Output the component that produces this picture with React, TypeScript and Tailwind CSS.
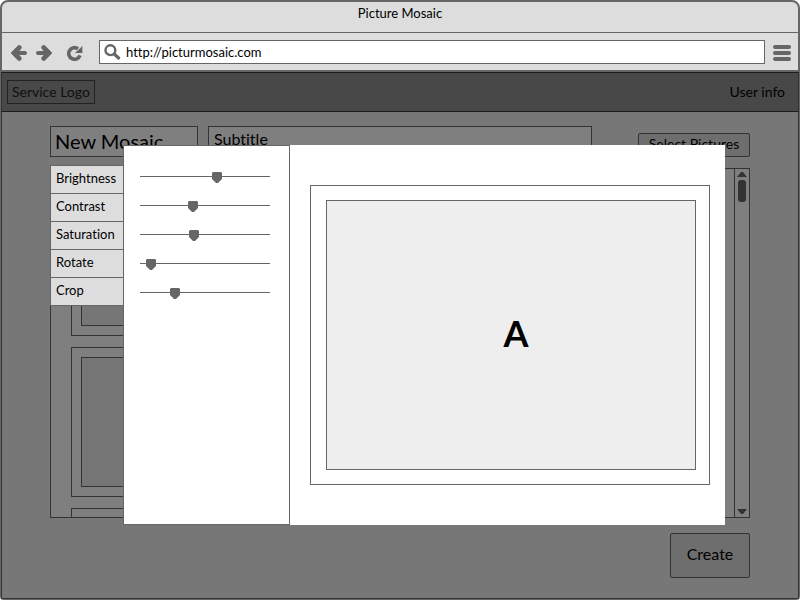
import React from "react";

const sliders = [
  { name: "Brightness", value: 72 },
  { name: "Contrast", value: 48 },
  { name: "Saturation", value: 49 },
  { name: "Rotate", value: 6 },
  { name: "Crop", value: 30 },
];

const thumbnails = Array.from({ length: 9 }, (_, i) => i);

function Arrow({ className = "" }: { className?: string }) {
  return (
    <svg width="16" height="16" viewBox="0 0 16 16" fill="none" stroke="#666" className={className} aria-hidden="true">
      <path d="M4 8H14" strokeWidth="4" strokeLinecap="round" />
      <path d="M8.2 2.6L3 8L8.2 13.4" strokeWidth="4.8" strokeLinecap="round" />
      <path d="M0 8L5 3V13Z" fill="#666" stroke="none" />
    </svg>
  );
}

function Toolbar() {
  return (
    <div className="flex h-[39px] items-center border-b-2 border-[#666] pr-[7px] pl-[9px]">
      <button aria-label="Back" className="mr-[9px] pt-[2px]">
        <Arrow />
      </button>
      <button aria-label="Forward" className="mr-[14px] pt-[2px]">
        <Arrow className="rotate-180" />
      </button>
      <button aria-label="Reload" className="mr-4 pt-[2px]">
        <svg width="17" height="16" viewBox="0 0 17 16" fill="none" aria-hidden="true">
          <path d="M12 3.8A5.8 5.8 0 1 0 14 10.4" stroke="#666" strokeWidth="3.6" />
          <path d="M16.4 1V8H9Z" fill="#666" />
        </svg>
      </button>
      <label className="flex h-6 min-w-0 flex-1 items-center border border-[#666] bg-white pl-1">
        <svg width="17" height="16" viewBox="0 0 17 16" fill="none" stroke="#666" aria-hidden="true">
          <circle cx="6.4" cy="6.2" r="4.9" strokeWidth="2.4" />
          <path d="M10.2 10L14.6 14" strokeWidth="3.2" strokeLinecap="round" />
        </svg>
        <input
          aria-label="Address"
          defaultValue="http://picturmosaic.com"
          className="ml-[5px] min-w-0 flex-1 bg-transparent pt-[2px] text-[13px] outline-none"
        />
      </label>
      <button aria-label="Menu" className="ml-2 flex w-[18px] flex-col gap-[2px] pt-[2px]">
        <span className="h-1 rounded-full bg-[#666]" />
        <span className="h-1 rounded-full bg-[#666]" />
        <span className="h-1 rounded-full bg-[#666]" />
      </button>
    </div>
  );
}

function Gallery() {
  return (
    <div className="mt-[11px] flex h-[350px] border border-[#666] bg-white">
      <div className="grid flex-1 auto-rows-[150px] grid-cols-3 gap-[11px] overflow-hidden px-5 pt-[17px]">
        {thumbnails.map((n) => (
          <div key={n} className="border border-[#666] p-[9px]">
            <div className="h-full border border-[#666] bg-[#ededed]" />
          </div>
        ))}
      </div>
      <div className="flex w-[15px] flex-col items-center border-l border-[#666] py-[3px]">
        <svg width="10" height="5" viewBox="0 0 10 5" aria-hidden="true">
          <path d="M0 5L4 0H6L10 5Z" fill="#666" />
        </svg>
        <div className="mt-[3px] h-[22px] w-2 rounded-[3px] bg-[#666]" />
        <svg width="10" height="5" viewBox="0 0 10 5" className="mt-auto" aria-hidden="true">
          <path d="M0 0L4 5H6L10 0Z" fill="#666" />
        </svg>
      </div>
    </div>
  );
}

function Editor() {
  return (
    <div className="absolute -inset-x-px top-0 -bottom-px flex items-start bg-black/50 pt-[73px] pr-[74px] pl-[49px]">
      <div className="mt-5 w-[73px] border-t border-l border-[#666] bg-[#ddd]">
        {sliders.map((s) => (
          <label
            key={s.name}
            htmlFor={s.name}
            className="block h-7 border-b border-[#666] pl-[5px] text-[13px] leading-6 whitespace-nowrap"
          >
            {s.name}
          </label>
        ))}
      </div>
      <div role="dialog" aria-label="Edit picture" className="flex min-w-0 flex-1 bg-white">
        <div className="flex w-[167px] flex-col gap-[18px] border border-[#666] px-4 pt-[26px]">
          {sliders.map((s) => (
            <input
              key={s.name}
              id={s.name}
              type="range"
              min={0}
              max={120}
              defaultValue={s.value}
              className="h-[11px] w-[130px] appearance-none bg-transparent bg-[linear-gradient(#666,#666)] bg-[length:100%_1px] bg-[position:0_4px] bg-no-repeat [&::-webkit-slider-thumb]:h-[11px] [&::-webkit-slider-thumb]:w-[10px] [&::-webkit-slider-thumb]:appearance-none [&::-webkit-slider-thumb]:bg-[#666] [&::-webkit-slider-thumb]:[clip-path:polygon(10%_0,90%_0,100%_10%,100%_64%,60%_100%,40%_100%,0_64%,0_10%)]"
            />
          ))}
        </div>
        <div className="min-w-0 flex-1 px-[15px] py-10 pl-5">
          <div className="h-[300px] border border-[#666] py-[14px] pr-[13px] pl-[15px]">
            <div className="flex h-full items-center justify-center border border-[#666] bg-[#eee] pb-1 pl-[10px] text-4xl font-bold">
              A
            </div>
          </div>
        </div>
      </div>
    </div>
  );
}

export default function App() {
  return (
    <div className="flex min-h-screen flex-col rounded-t-lg rounded-b-sm border-2 border-[#666] bg-[#ddd] font-['Lato','Liberation_Sans',sans-serif] text-black [font-variant-ligatures:none]">
      <h1 className="h-[31px] border-b border-[#666] text-center text-[13px] leading-[22px]">Picture Mosaic</h1>
      <Toolbar />
      <main className="relative flex-1 bg-[#eee]">
        <header className="flex h-10 items-center justify-between border-y border-[#383838] bg-[#909090] pr-[13px] pl-[5px]">
          <div className="flex h-6 items-center border border-[#444] px-1 text-sm text-[#222]">Service Logo</div>
          <a href="#user" className="text-sm">
            User info
          </a>
        </header>
        <div className="px-12 pt-[14px] pb-5">
          <div className="flex items-end">
            <input
              aria-label="Mosaic title"
              defaultValue="New Mosaic"
              className="h-[31px] w-[148px] border border-[#666] bg-white px-1 pb-[2px] text-xl outline-none"
            />
            <input
              aria-label="Subtitle"
              defaultValue="Subtitle"
              className="ml-[10px] h-[31px] min-w-0 flex-1 border border-[#666] bg-white px-[5px] pb-[6px] text-base outline-none"
            />
            <button className="ml-[46px] h-6 w-28 rounded-xs border border-[#666] bg-[#ddd] pb-[2px] text-sm">
              Select Pictures
            </button>
          </div>
          <Gallery />
          <div className="mt-[15px] flex justify-end">
            <button className="h-[45px] w-20 rounded-xs border border-[#666] bg-[#ddd] pb-1 text-base">Create</button>
          </div>
        </div>
        <Editor />
      </main>
    </div>
  );
}
